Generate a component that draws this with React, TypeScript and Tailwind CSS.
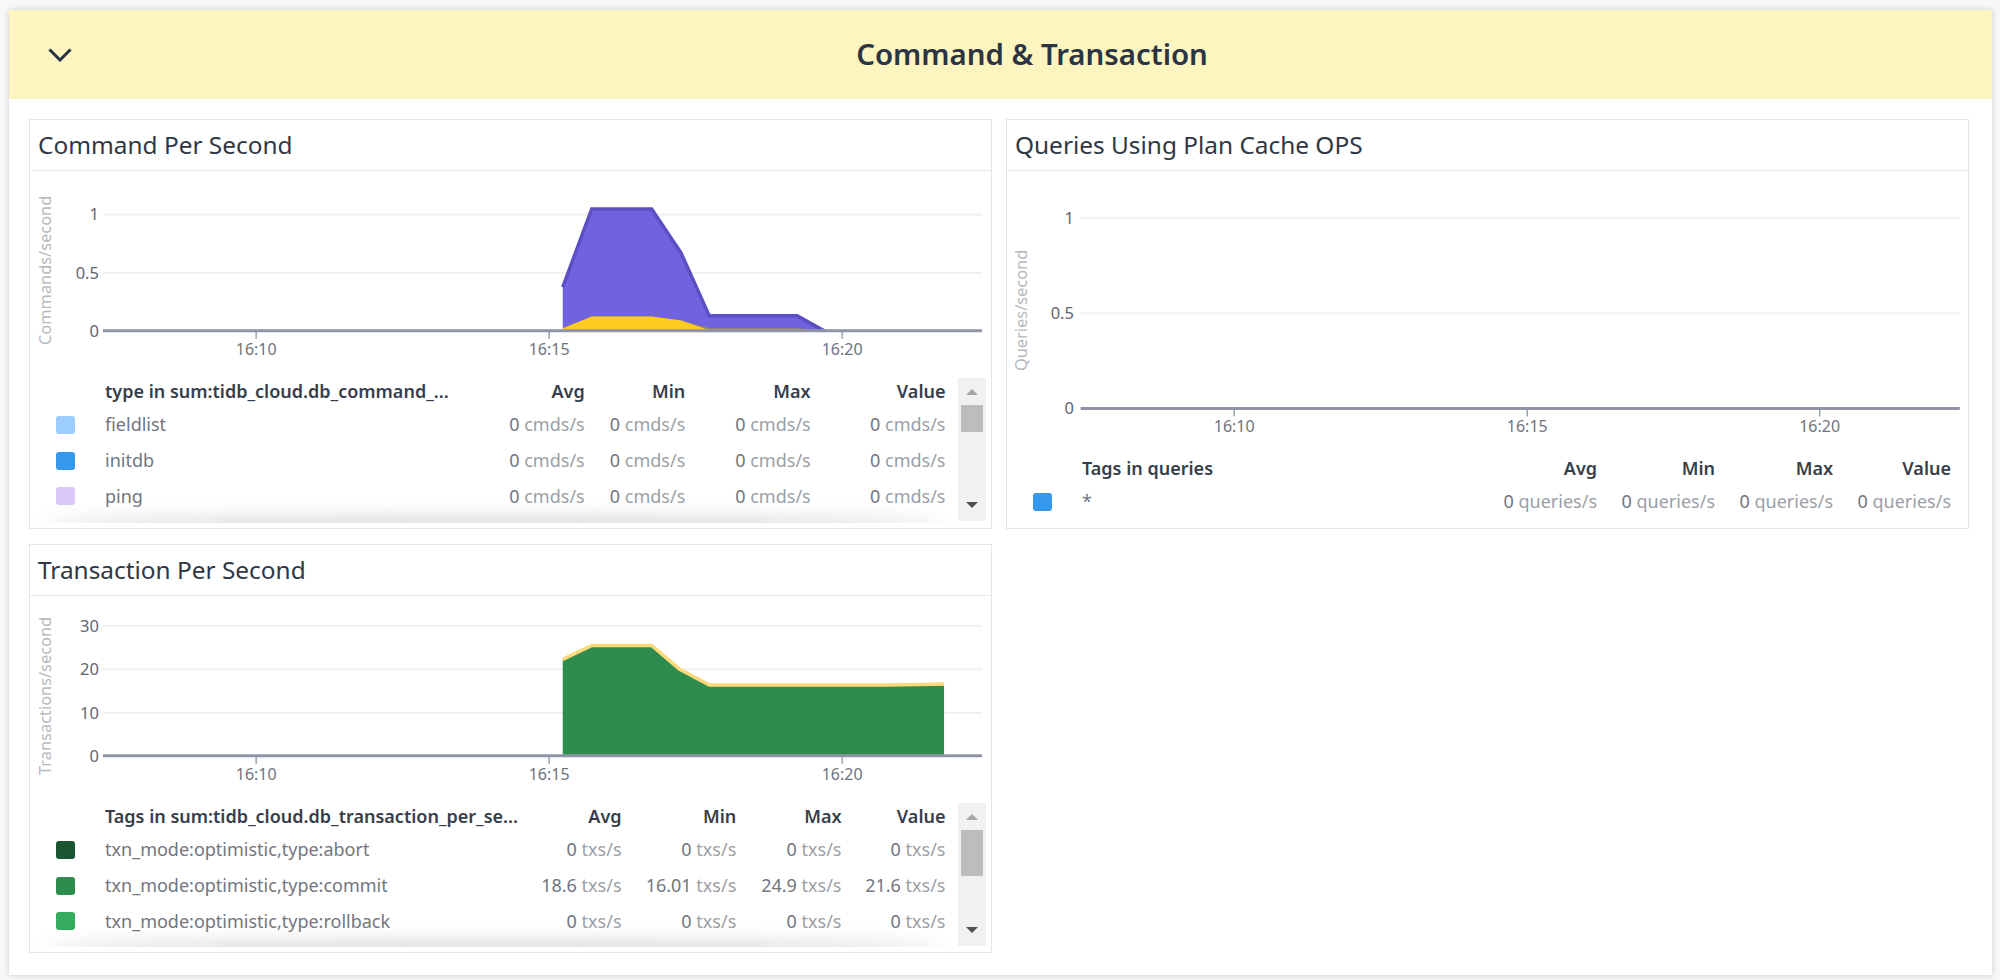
import React from "react";

const font = "font-['Noto_Sans','Open_Sans',sans-serif]";

type Cell = [string, string];
type Row = { color: string; name: string; cells: Cell[] };

function Swatch({ color }: { color: string }) {
  return <span className="h-[18px] w-[18.5px] rounded-[3px]" style={{ backgroundColor: color }} />;
}

function Legend({
  head,
  rows,
  cols,
  scroll,
  thumb,
  height,
}: {
  head: string[];
  rows: Row[];
  cols: string;
  scroll?: boolean;
  thumb?: string;
  height: string;
}) {
  return (
    <div className={`relative flex ${height}`}>
      <div className={`min-w-0 flex-1 pl-[26px] ${scroll ? "pr-[12.5px]" : "pr-[17px]"}`}>
        <div className={`grid h-[26px] items-center text-[18px] font-semibold leading-none text-[#363e4b] ${cols}`}>
          <span />
          <span />
          <span className="truncate leading-[24px]">{head[0]}</span>
          {head.slice(1).map((h) => (
            <span key={h} className="text-right">
              {h}
            </span>
          ))}
        </div>
        <div className="pt-[3px]">
          {rows.map((r) => (
            <div key={r.name} className={`grid h-[35.75px] items-center text-[18px] text-[#71767f] ${cols}`}>
              <Swatch color={r.color} />
              <span />
              <span className="truncate">{r.name}</span>
              {r.cells.map((c, i) => (
                <span key={i} className="whitespace-nowrap text-right">
                  {c[0]} <span className="text-[#9b9fa6]">{c[1]}</span>
                </span>
              ))}
            </div>
          ))}
        </div>
      </div>
      {scroll && (
        <>
          <div className="mr-[5px] flex h-[143px] w-[28px] flex-col items-center bg-[#f1f1f1]">
            <div className="flex h-[27px] items-center justify-center">
              <svg width="12" height="6" viewBox="0 0 12 6">
                <path d="M6 0L12 6H0Z" fill="#a6a6a6" />
              </svg>
            </div>
            <div className={`w-[22px] bg-[#bdbdbd] ${thumb}`} />
            <div className="flex flex-1 items-end justify-center pb-[13px]">
              <svg width="12" height="6" viewBox="0 0 12 6">
                <path d="M0 0H12L6 6Z" fill="#505050" />
              </svg>
            </div>
          </div>
          <div className="pointer-events-none absolute bottom-[5px] left-0 right-[33px] h-[30px] overflow-hidden">
            <div className="absolute -bottom-[6px] left-[14px] right-[16px] h-[10px] rounded-[50%] bg-[#9a9a9a] opacity-60 blur-[9px]" />
          </div>
        </>
      )}
    </div>
  );
}

function Chart({
  box,
  h,
  left,
  right,
  labelRight,
  gridY,
  ticks,
  yLabel,
  yLabelX,
  yLabelY,
  children,
}: {
  box: string;
  h: number;
  left: number;
  right: number;
  labelRight: number;
  gridY: [string, number][];
  ticks: [string, number][];
  yLabel: string;
  yLabelX: number;
  yLabelY: number;
  children?: React.ReactNode;
}) {
  const base = gridY[gridY.length - 1][1];
  return (
    <svg className="block" width="100%" height={h} viewBox={box} preserveAspectRatio="xMinYMin meet">
      {gridY.slice(0, -1).map(([, y]) => (
        <line key={y} x1={left} x2={right} y1={y} y2={y} stroke="#f1f1f3" strokeWidth="2" />
      ))}
      {children}
      <line x1={left} x2={right} y1={base} y2={base} stroke="#8f93a6" strokeWidth="3" />
      {ticks.map(([t, x]) => (
        <g key={t}>
          <line x1={x} x2={x} y1={base} y2={base + 8} stroke="#8f93a6" strokeWidth="1.3" />
          <text x={x} y={base + 24} textAnchor="middle" fontSize="16" fill="#6f747d">
            {t}
          </text>
        </g>
      ))}
      {gridY.map(([l, y]) => (
        <text key={l} x={labelRight} y={y + 6} textAnchor="end" fontSize="16.5" fill="#5f6570">
          {l}
        </text>
      ))}
      <text
        x={yLabelX}
        y={yLabelY}
        textAnchor="middle"
        fontSize="16.4"
        fill="#b7b9c0"
        transform={`rotate(-90 ${yLabelX} ${yLabelY})`}
      >
        {yLabel}
      </text>
    </svg>
  );
}

function Panel({ title, children }: { title: string; children: React.ReactNode }) {
  return (
    <div className="border border-[#e2e4ee] bg-white">
      <div className="flex h-[51px] items-center border-b border-[#e8e9f1] pl-[8px] text-[24.4px] text-[#2f3744]">{title}</div>
      {children}
    </div>
  );
}

const cmd = (v = "0") => [v, "cmds/s"] as Cell;
const txs = (v = "0") => [v, "txs/s"] as Cell;
const q = (v = "0") => [v, "queries/s"] as Cell;

const commandRows: Row[] = [
  { color: "#9ccdfd", name: "fieldlist", cells: [cmd(), cmd(), cmd(), cmd()] },
  { color: "#3598ec", name: "initdb", cells: [cmd(), cmd(), cmd(), cmd()] },
  { color: "#dcc7fb", name: "ping", cells: [cmd(), cmd(), cmd(), cmd()] },
];

const txnRows: Row[] = [
  { color: "#1a5632", name: "txn_mode:optimistic,type:abort", cells: [txs(), txs(), txs(), txs()] },
  { color: "#2d8c4e", name: "txn_mode:optimistic,type:commit", cells: [txs("18.6"), txs("16.01"), txs("24.9"), txs("21.6")] },
  { color: "#35ab60", name: "txn_mode:optimistic,type:rollback", cells: [txs(), txs(), txs(), txs()] },
];

const queryRows: Row[] = [{ color: "#3598ec", name: "*", cells: [q(), q(), q(), q()] }];

export default function App() {
  return (
    <div className={`h-[980px] overflow-hidden bg-[#f7f8f9] pb-[5px] pl-[9px] pr-[8px] pt-[10px] ${font}`}>
      <div className="h-[965px] bg-white shadow-[0_0_6px_rgba(60,70,90,0.25)]">
        <div className="flex h-[89px] items-center bg-[#fdf5bf] pl-[39px]">
          <svg width="24" height="14" viewBox="0 0 24 14" fill="none">
            <path d="M1.5 1.5L12 12L22.5 1.5" stroke="#283445" strokeWidth="3" />
          </svg>
          <div className="flex-1 text-center text-[29.4px] font-semibold text-[#2b3443]">Command &amp; Transaction</div>
        </div>
        <div className="grid grid-cols-2 gap-x-[14px] gap-y-[15px] pl-[20px] pr-[23px] pt-[20px]">
          <Panel title="Command Per Second">
            <Chart
              box="30 171 962 207"
              h={207}
              left={103}
              right={983}
              labelRight={99}
              gridY={[["1", 214.5], ["0.5", 273], ["0", 331]]}
              ticks={[["16:10", 256.4], ["16:15", 549.7], ["16:20", 843]]}
              yLabel="Commands/second"
              yLabelX={51}
              yLabelY={270.5}
            >
              <path d="M563.3 331V287.3L592.3 209H652.3L681.7 253L710 316H798L825 331Z" fill="#7162e0" />
              <path d="M563.3 287.3L592.3 209H652.3L681.7 253L710 316H798L825 331" fill="none" stroke="#5c4fc4" strokeWidth="3.5" />
              <path d="M563.3 331V328.3L592.3 316.7H652.3L681.7 320.7L710 328.3H798L825 331Z" fill="#a08c55" />
              <path d="M563.3 331V328.3L592.3 316.7H652.3L681.7 320.7L710 330.5Z" fill="#ffcb1f" />
            </Chart>
            <Legend
              height="h-[150px]"
              head={["type in sum:tidb_cloud.db_command_...", "Avg", "Min", "Max", "Value"]}
              rows={commandRows}
              cols="grid-cols-[18.5px_30.5px_1fr_100px_100.6px_125.4px_134.8px]"
              scroll
              thumb="h-[27px]"
            />
          </Panel>
          <Panel title="Queries Using Plan Cache OPS">
            <Chart
              box="1006 171 962 284"
              h={284}
              left={1079.7}
              right={1959.8}
              labelRight={1073}
              gridY={[["1", 217.7], ["0.5", 313.3], ["0", 408.7]]}
              ticks={[["16:10", 1233.4], ["16:15", 1526.8], ["16:20", 1819.5]]}
              yLabel="Queries/second"
              yLabelX={1026}
              yLabelY={310.5}
            />
            <Legend
              height="h-[73px]"
              head={["Tags in queries", "Avg", "Min", "Max", "Value"]}
              rows={queryRows}
              cols="grid-cols-[18.5px_30.5px_1fr_118px_118px_118px_118px]"
            />
          </Panel>
          <Panel title="Transaction Per Second">
            <Chart
              box="30 596 962 207"
              h={207}
              left={103}
              right={983}
              labelRight={99}
              gridY={[["30", 626], ["20", 669.3], ["10", 713], ["0", 756]]}
              ticks={[["16:10", 256.4], ["16:15", 549.7], ["16:20", 843]]}
              yLabel="Transactions/second"
              yLabelX={51}
              yLabelY={696}
            >
              <path d="M563.3 756V660L592.3 646.7H652.3L680 670L710 686H890L945 685.3V756Z" fill="#2d8c4e" />
              <path d="M563.3 659.5L592.3 645.5H652.3L680 669L710 685H890L945 684" fill="none" stroke="#fdd97a" strokeWidth="3.5" />
            </Chart>
            <Legend
              height="h-[149px]"
              head={["Tags in sum:tidb_cloud.db_transaction_per_se...", "Avg", "Min", "Max", "Value"]}
              rows={txnRows}
              cols="grid-cols-[18.5px_30.5px_1fr_100px_114.8px_105.2px_104px]"
              scroll
              thumb="h-[46px]"
            />
          </Panel>
        </div>
      </div>
    </div>
  );
}
